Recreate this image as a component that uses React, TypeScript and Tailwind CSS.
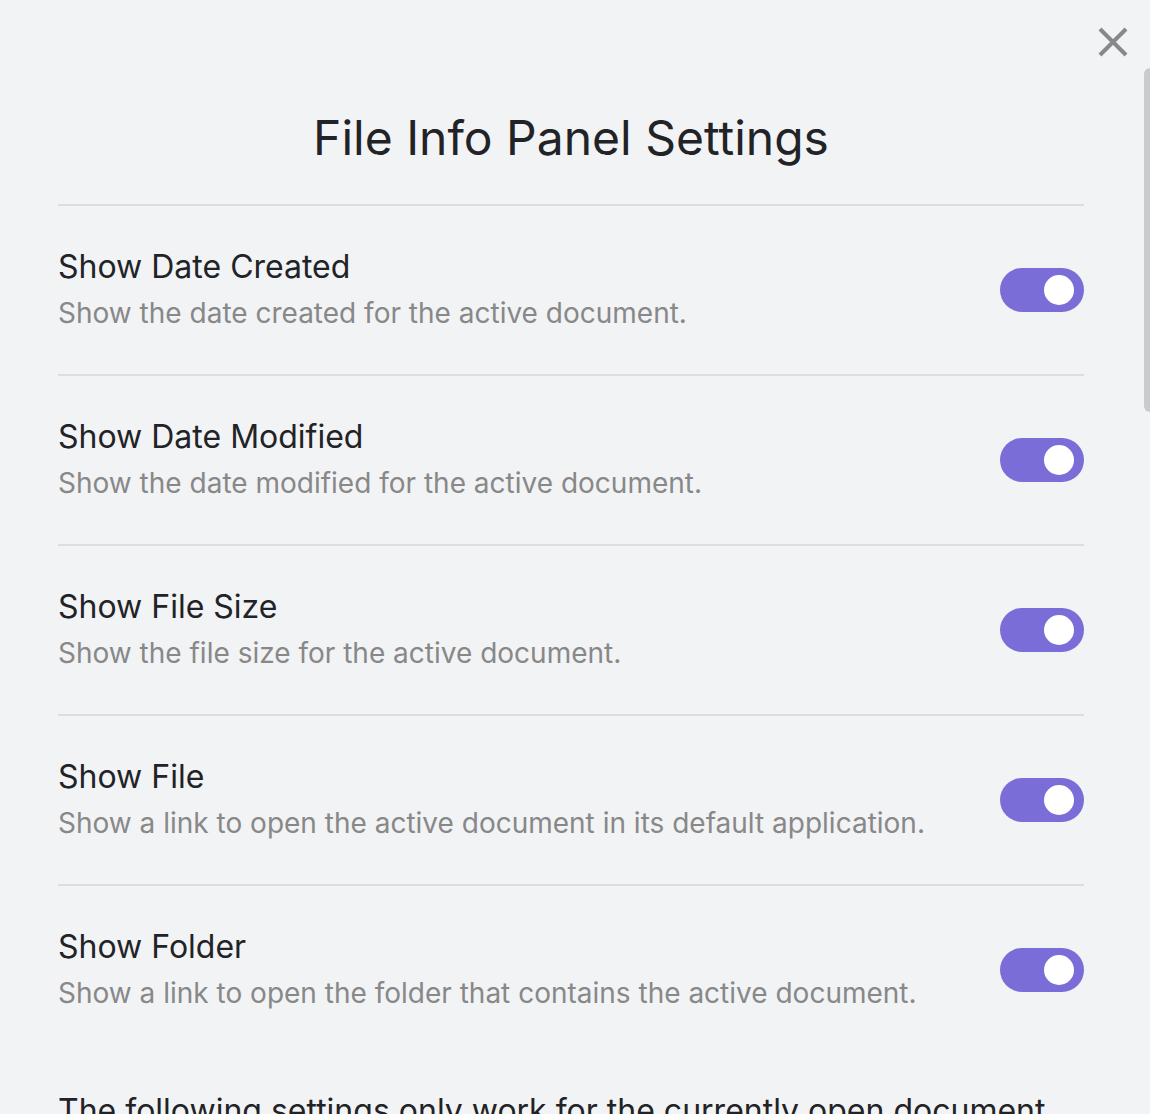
const settings = [
  { name: "Show Date Created", desc: "Show the date created for the active document." },
  { name: "Show Date Modified", desc: "Show the date modified for the active document." },
  { name: "Show File Size", desc: "Show the file size for the active document." },
  { name: "Show File", desc: "Show a link to open the active document in its default application." },
  { name: "Show Folder", desc: "Show a link to open the folder that contains the active document." },
];

function Toggle() {
  return (
    <div className="flex h-[44px] w-[84px] shrink-0 items-center justify-end rounded-full bg-[#7a6dd8] pr-[10px]">
      <div className="h-[30px] w-[30px] rounded-full bg-white" />
    </div>
  );
}

export default function App() {
  return (
    <div
      className="relative h-[1114px] w-[1150px] overflow-hidden bg-[#f2f3f5] text-[#222326]"
      style={{ fontFamily: "Inter, 'Noto Sans', sans-serif" }}
    >
      <button className="absolute right-[22px] top-[27px] text-[#888888]">
        <svg width="30" height="30" viewBox="0 0 30 30" fill="none" stroke="currentColor" strokeWidth="4">
          <path d="M2 2 L28 28 M28 2 L2 28" />
        </svg>
      </button>
      <div className="absolute right-0 top-[68px] h-[344px] w-[6px] rounded-l-md bg-[#cbcbcd]" />

      <div className="pl-[58px] pr-[66px] pt-[108px]">
        <h1 className="pb-[36px] text-center text-[48px] leading-[60px] font-normal">File Info Panel Settings</h1>
        <div className="border-t-2 border-[#dcdde0]">
          {settings.map((s) => (
            <div key={s.name} className="flex h-[170px] items-center justify-between border-b-2 border-[#dcdde0] last:h-[168px] last:border-b-0">
              <div>
                <div className="text-[32px] leading-[40px]">{s.name}</div>
                <div className="mt-[6px] text-[28px] leading-[40px] text-[#888888]">{s.desc}</div>
              </div>
              <Toggle />
            </div>
          ))}
        </div>
        <div className="pt-[35px] text-[32px] leading-[44px] whitespace-nowrap">
          The following settings only work for the currently open document
        </div>
      </div>
    </div>
  );
}
